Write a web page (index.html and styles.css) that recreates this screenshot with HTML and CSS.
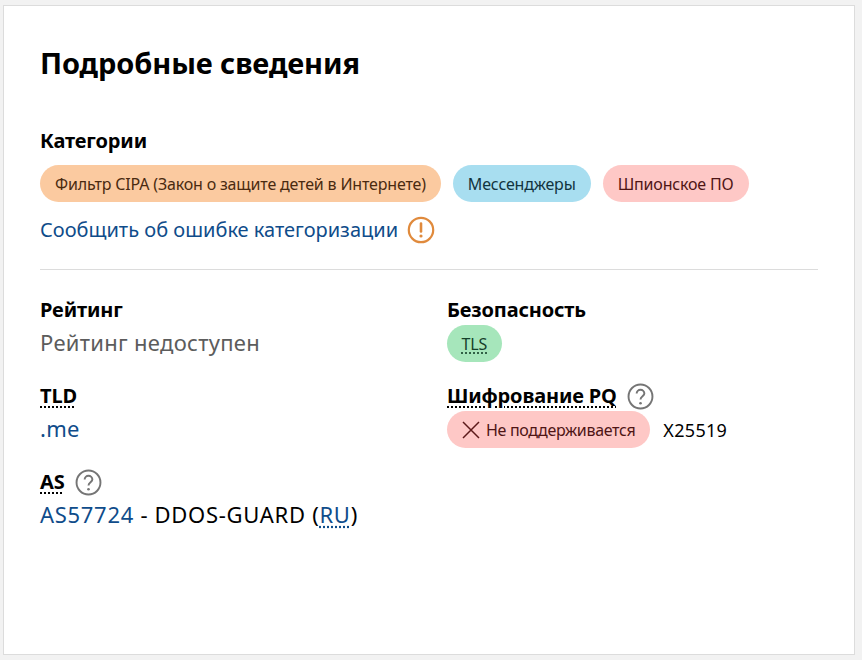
FILE: index.html
```html
<!DOCTYPE html>
<html lang="ru">
<head>
    <meta charset="UTF-8">
    <meta name="viewport" content="width=device-width, initial-scale=1.0">
    <title>Подробные сведения</title>
    <link rel="stylesheet" href="styles.css">
</head>
<body>
    <div class="details-card">
        <h2 class="details-title">Подробные сведения</h2>

        <div class="details-section">
            <h3 class="field-label">Категории</h3>
            <div class="tag-row">
                <span class="tag tag-orange">Фильтр CIPA (Закон о защите детей в Интернете)</span>
                <span class="tag tag-blue">Мессенджеры</span>
                <span class="tag tag-red">Шпионское ПО</span>
            </div>
            <div class="report-row">
                <a class="link" href="#">Сообщить об ошибке категоризации</a>
                <svg class="icon" viewBox="0 0 28 28" aria-hidden="true">
                    <circle cx="14" cy="14" r="12.2" fill="none" stroke="#e08a3c" stroke-width="2.2"/>
                    <path d="M14 7.5v8" fill="none" stroke="#e08a3c" stroke-width="2.6" stroke-linecap="round"/>
                    <circle cx="14" cy="20" r="1.6" fill="#e08a3c"/>
                </svg>
            </div>
        </div>

        <div class="details-grid">
            <div class="field">
                <h3 class="field-label">Рейтинг</h3>
                <div class="field-value muted">Рейтинг недоступен</div>
            </div>
            <div class="field">
                <h3 class="field-label">Безопасность</h3>
                <div class="field-value pq-row"><span class="tag tag-green tag-short"><span class="dotted">TLS</span></span></div>
            </div>
            <div class="field">
                <h3 class="field-label"><span class="dotted-dark">TLD</span></h3>
                <div class="field-value"><a class="link" href="#">.me</a></div>
            </div>
            <div class="field">
                <h3 class="field-label">
                    <span class="dotted-dark">Шифрование PQ</span>
                    <svg class="icon icon-help" viewBox="0 0 28 28" aria-hidden="true">
                        <circle cx="14" cy="14" r="12.4" fill="none" stroke="#757575" stroke-width="2"/>
                        <path d="M10 11a4 4 0 0 1 8 0c0 2.6-4 3-4 6" fill="none" stroke="#757575" stroke-width="2"/>
                        <circle cx="14" cy="21" r="1.4" fill="#757575"/>
                    </svg>
                </h3>
                <div class="field-value pq-row">
                    <span class="tag tag-red tag-icon">
                        <svg class="cross" viewBox="0 0 18 18" aria-hidden="true">
                            <path d="M1 1l16 16M17 1L1 17" fill="none" stroke="#5c1a1a" stroke-width="1.5"/>
                        </svg>
                        Не поддерживается
                    </span>
                    <span class="pq-name">X25519</span>
                </div>
            </div>
            <div class="field">
                <h3 class="field-label">
                    <span class="dotted-dark">AS</span>
                    <svg class="icon icon-help" viewBox="0 0 28 28" aria-hidden="true">
                        <circle cx="14" cy="14" r="12.4" fill="none" stroke="#757575" stroke-width="2"/>
                        <path d="M10 11a4 4 0 0 1 8 0c0 2.6-4 3-4 6" fill="none" stroke="#757575" stroke-width="2"/>
                        <circle cx="14" cy="21" r="1.4" fill="#757575"/>
                    </svg>
                </h3>
                <div class="field-value as-value"><a class="link" href="#">AS57724</a> - DDOS-GUARD (<a class="link dotted" href="#">RU</a>)</div>
            </div>
        </div>
    </div>
</body>
</html>
```

FILE: styles.css
```css
* {
    margin: 0;
    padding: 0;
    box-sizing: border-box;
}

body {
    font-family: "Noto Sans", "Open Sans", sans-serif;
    background-color: #f2f2f2;
    color: #000;
    padding: 5px 7px 5px 3px;
    height: 660px;
    overflow: hidden;
}

.details-card {
    height: 650px;
    background: white;
    border: 1px solid #dcdcdc;
    padding: 37px 36px 0 36px;
}

.details-title {
    font-size: 29px;
    line-height: 40px;
    font-weight: 700;
    letter-spacing: -0.1px;
}

.details-section {
    margin-top: 45px;
    padding-bottom: 21px;
    border-bottom: 1px solid #dcdcdc;
}

.field-label {
    display: flex;
    align-items: center;
    gap: 10px;
    height: 26px;
    font-size: 20px;
    line-height: 24px;
    font-weight: 700;
    letter-spacing: -0.15px;
}

.tag-row {
    display: flex;
    gap: 12px;
    margin-top: 11px;
}

.tag {
    display: inline-flex;
    align-items: center;
    height: 37px;
    padding: 0 15px;
    border-radius: 19px;
    font-size: 16px;
    letter-spacing: -0.17px;
}

.tag-orange {
    background-color: #fbcaa0;
    color: #4a2a10;
}

.tag-blue {
    background-color: #a8def0;
    color: #12343f;
}

.tag-red {
    background-color: #fec8c6;
    color: #4f1515;
}

.tag-green {
    background-color: #a6e6bb;
    color: #14402a;
}

.tag-short {
    padding: 0 14.5px;
}

.report-row {
    display: flex;
    align-items: center;
    gap: 9px;
    margin-top: 10px;
    font-size: 20px;
    line-height: 36px;
}

.link {
    color: #0f4c8a;
    text-decoration: none;
}

.icon {
    width: 28px;
    height: 28px;
    flex-shrink: 0;
}

.icon-help {
    width: 27px;
    height: 27px;
}

.details-grid {
    display: grid;
    grid-template-columns: 407px 1fr;
    row-gap: 21px;
    margin-top: 27px;
}

.field-label + .field-value {
    margin-top: 2px;
}

.field-value {
    height: 37px;
    font-size: 22px;
    line-height: 34px;
    letter-spacing: 0.3px;
}

.as-value {
    letter-spacing: 0.7px;
}

.muted {
    color: #5c5c5c;
}

.dotted {
    text-decoration: underline dotted;
    text-underline-offset: 3px;
}

.dotted-dark {
    text-decoration: underline dotted 2px;
    text-underline-offset: 3px;
}

.pq-row {
    display: flex;
    align-items: center;
    gap: 13px;
}

.tag-icon {
    gap: 6px;
    letter-spacing: -0.32px;
}

.cross {
    width: 18px;
    height: 18px;
}

.pq-name {
    font-size: 18px;
    letter-spacing: 0.3px;
}
```
